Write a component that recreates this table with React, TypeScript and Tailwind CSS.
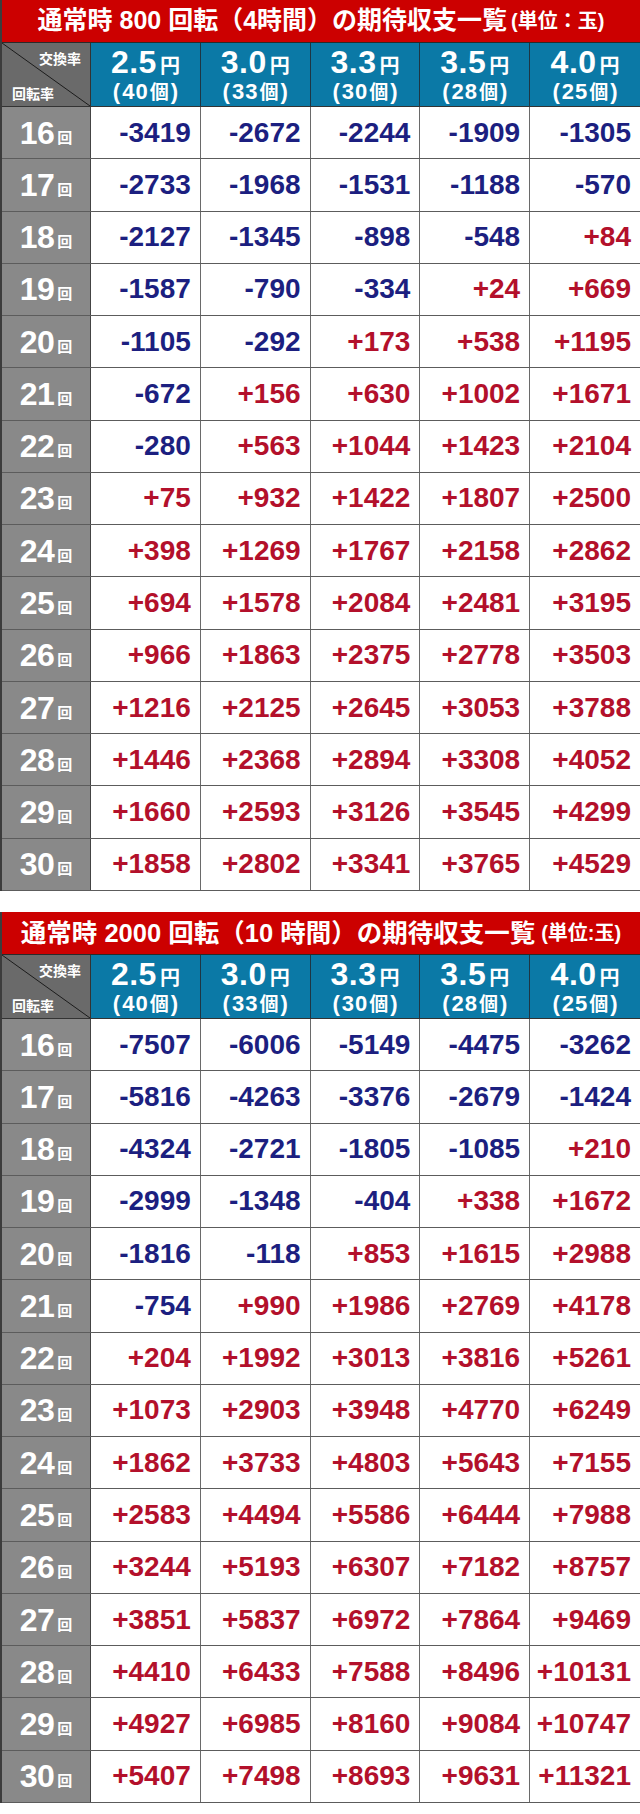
import React from 'react';

type Row = { spin: number; values: string[] };

const rates = [
    { yen: '2.5', balls: '40' },
    { yen: '3.0', balls: '33' },
    { yen: '3.3', balls: '30' },
    { yen: '3.5', balls: '28' },
    { yen: '4.0', balls: '25' },
];

const table1: Row[] = [
    { spin: 16, values: ['-3419', '-2672', '-2244', '-1909', '-1305'] },
    { spin: 17, values: ['-2733', '-1968', '-1531', '-1188', '-570'] },
    { spin: 18, values: ['-2127', '-1345', '-898', '-548', '+84'] },
    { spin: 19, values: ['-1587', '-790', '-334', '+24', '+669'] },
    { spin: 20, values: ['-1105', '-292', '+173', '+538', '+1195'] },
    { spin: 21, values: ['-672', '+156', '+630', '+1002', '+1671'] },
    { spin: 22, values: ['-280', '+563', '+1044', '+1423', '+2104'] },
    { spin: 23, values: ['+75', '+932', '+1422', '+1807', '+2500'] },
    { spin: 24, values: ['+398', '+1269', '+1767', '+2158', '+2862'] },
    { spin: 25, values: ['+694', '+1578', '+2084', '+2481', '+3195'] },
    { spin: 26, values: ['+966', '+1863', '+2375', '+2778', '+3503'] },
    { spin: 27, values: ['+1216', '+2125', '+2645', '+3053', '+3788'] },
    { spin: 28, values: ['+1446', '+2368', '+2894', '+3308', '+4052'] },
    { spin: 29, values: ['+1660', '+2593', '+3126', '+3545', '+4299'] },
    { spin: 30, values: ['+1858', '+2802', '+3341', '+3765', '+4529'] },
];

const table2: Row[] = [
    { spin: 16, values: ['-7507', '-6006', '-5149', '-4475', '-3262'] },
    { spin: 17, values: ['-5816', '-4263', '-3376', '-2679', '-1424'] },
    { spin: 18, values: ['-4324', '-2721', '-1805', '-1085', '+210'] },
    { spin: 19, values: ['-2999', '-1348', '-404', '+338', '+1672'] },
    { spin: 20, values: ['-1816', '-118', '+853', '+1615', '+2988'] },
    { spin: 21, values: ['-754', '+990', '+1986', '+2769', '+4178'] },
    { spin: 22, values: ['+204', '+1992', '+3013', '+3816', '+5261'] },
    { spin: 23, values: ['+1073', '+2903', '+3948', '+4770', '+6249'] },
    { spin: 24, values: ['+1862', '+3733', '+4803', '+5643', '+7155'] },
    { spin: 25, values: ['+2583', '+4494', '+5586', '+6444', '+7988'] },
    { spin: 26, values: ['+3244', '+5193', '+6307', '+7182', '+8757'] },
    { spin: 27, values: ['+3851', '+5837', '+6972', '+7864', '+9469'] },
    { spin: 28, values: ['+4410', '+6433', '+7588', '+8496', '+10131'] },
    { spin: 29, values: ['+4927', '+6985', '+8160', '+9084', '+10747'] },
    { spin: 30, values: ['+5407', '+7498', '+8693', '+9631', '+11321'] },
];

const font = "font-['Liberation_Sans','Noto_Sans_CJK_JP',sans-serif]";

const ExpectTable: React.FC<{ title: React.ReactNode; rows: Row[] }> = ({ title, rows }) => (
    <div className="flex flex-col border-l-2 border-[#3c3c3c]">
        <div className="h-[43px] bg-[#cc0000] border-b border-[#2a2a2a] flex items-center justify-center text-white font-bold whitespace-nowrap">
            {title}
        </div>

        <div className="grid grid-cols-[89px_repeat(5,minmax(0,1fr))] h-[64px] border-b border-[#333]">
            <div className="relative bg-[#6a6a6a] border-r border-[#333] text-white font-bold text-[14px] leading-none">
                <svg className="absolute inset-0 w-full h-full" preserveAspectRatio="none" viewBox="0 0 89 64">
                    <line x1="0" y1="0" x2="89" y2="64" stroke="#1a1a1a" strokeWidth="1" />
                </svg>
                <span className="absolute right-[9px] top-[9px]">交換率</span>
                <span className="absolute left-[10px] bottom-[5px]">回転率</span>
            </div>
            {rates.map((r, i) => (
                <div
                    key={r.yen}
                    className={`bg-[#0b79a6] flex flex-col items-center justify-center text-white font-bold leading-none ${i < 4 ? 'border-r border-[#1e3644]' : ''}`}
                >
                    <div className="flex items-baseline">
                        <span className="text-[32px] tracking-[0.5px]">{r.yen}</span>
                        <span className="text-[20px] ml-[3px]">円</span>
                    </div>
                    <div className="flex items-baseline text-[22px] mt-[3px]">
                        <span>(</span>
                        <span className="ml-[2px] tracking-[1px]">{r.balls}</span>
                        <span className="text-[19px] ml-[1px]">個</span>
                        <span className="ml-[2px]">)</span>
                    </div>
                </div>
            ))}
        </div>

        {rows.map((row) => (
            <div key={row.spin} className="grid grid-cols-[89px_repeat(5,minmax(0,1fr))] h-[52.27px] border-b border-[#5c5c5c]">
                <div className="bg-[#898989] border-r border-[#444] flex items-center justify-center text-white font-bold">
                    <span className="text-[32px] leading-none tracking-[-0.5px]">{row.spin}</span>
                    <span className="text-[15px] leading-none ml-[3px] mt-[9px]">回</span>
                </div>
                {row.values.map((v, i) => (
                    <div
                        key={i}
                        className={`bg-white flex items-center justify-end pr-[9px] text-[28px] font-bold leading-none ${
                            v.startsWith('-') ? 'text-[#1c1f80]' : 'text-[#b3102b]'
                        } ${i < 4 ? 'border-r border-[#6a6a6a]' : ''}`}
                    >
                        {v}
                    </div>
                ))}
            </div>
        ))}
    </div>
);

export default function App() {
    return (
        <div className={`w-[640px] bg-white ${font} pb-[11px]`}>
            <ExpectTable
                rows={table1}
                title={
                    <>
                        <span className="text-[25px]">通常時 800 回転（4時間）の期待収支一覧</span>
                        <span className="text-[20px] ml-[4px]">(単位：玉)</span>
                    </>
                }
            />
            <div className="h-[21px]" />
            <ExpectTable
                rows={table2}
                title={
                    <>
                        <span className="text-[25.5px]">通常時 2000 回転（10 時間）の期待収支一覧</span>
                        <span className="text-[20px] ml-[6px]">(単位:玉)</span>
                    </>
                }
            />
        </div>
    );
}
